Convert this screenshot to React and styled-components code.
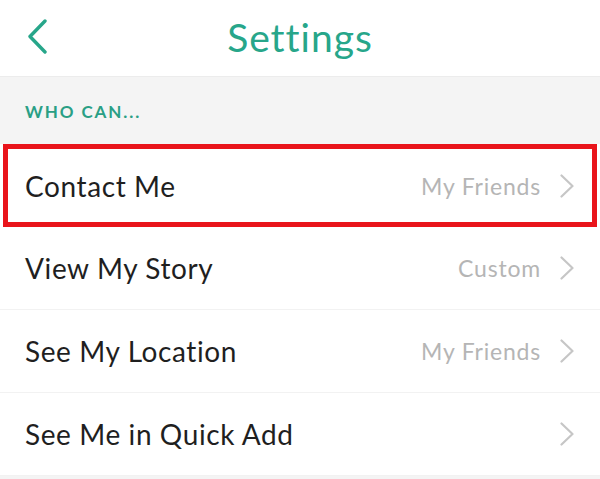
import styled, { createGlobalStyle } from "styled-components";

const Global = createGlobalStyle`
  html, body {
    margin: 0;
    padding: 0;
    background: #f4f4f4;
  }
  body {
    font-family: Lato, "Open Sans", sans-serif;
  }
`;

const Screen = styled.div`
  width: 600px;
  height: 479px;
  background: #f4f4f4;
  overflow: hidden;
`;

const Header = styled.header`
  height: 76px;
  background: #fff;
  border-bottom: 1px solid #ececec;
  display: grid;
  grid-template-columns: 80px 1fr 80px;
  align-items: center;
`;

const Back = styled.button`
  border: 0;
  background: none;
  padding: 0 0 4px 27px;
  display: flex;
  align-items: center;
  height: 100%;
`;

const Title = styled.h1`
  margin: 0;
  text-align: center;
  font-size: 39px;
  font-weight: 400;
  color: #27a68a;
  letter-spacing: 1px;
  padding-bottom: 2px;
`;

const SectionLabel = styled.div`
  height: 67px;
  padding-left: 25px;
  display: flex;
  align-items: center;
  font-size: 17px;
  font-weight: 700;
  letter-spacing: 1.9px;
  color: #2a9f85;
  padding-top: 1px;
  box-sizing: border-box;
`;

const List = styled.div`
  background: #fff;
`;

const Row = styled.div`
  height: 83px;
  box-sizing: border-box;
  display: flex;
  align-items: center;
  padding: 0 26px 0 25px;
  border-bottom: 1px solid #f2f2f2;
  ${(p) =>
    p.$highlighted &&
    `
    margin: 0 3px;
    border: 5px solid #e9141b;
    padding: 0 18px 0 17px;
  `}
`;

const Label = styled.span`
  flex: 1;
  font-size: 28px;
  color: #1f1f1f;
  letter-spacing: 0.6px;
`;

const Value = styled.span`
  font-size: 23px;
  color: #b5b5b5;
  margin-right: 19px;
  letter-spacing: 0.8px;
`;

const Chevron = ({ color = "#c6c6c6", w = 14, h = 24, stroke = 2.2 }) => (
  <svg width={w} height={h} viewBox={`0 0 ${w} ${h}`} fill="none">
    <path
      d={`M1.5 1.5 L${w - 1.5} ${h / 2} L1.5 ${h - 1.5}`}
      stroke={color}
      strokeWidth={stroke}
      strokeLinecap="round"
      strokeLinejoin="round"
    />
  </svg>
);

const BackIcon = () => (
  <svg width="20" height="35" viewBox="0 0 20 35" fill="none">
    <path
      d="M18 2 L3 17.5 L18 33"
      stroke="#27a68a"
      strokeWidth="3.4"
      strokeLinecap="round"
      strokeLinejoin="round"
    />
  </svg>
);

const rows = [
  { label: "Contact Me", value: "My Friends", highlighted: true },
  { label: "View My Story", value: "Custom" },
  { label: "See My Location", value: "My Friends" },
  { label: "See Me in Quick Add", value: "" },
];

export default function App() {
  return (
    <Screen>
      <Global />
      <Header>
        <Back aria-label="Back">
          <BackIcon />
        </Back>
        <Title>Settings</Title>
        <span />
      </Header>
      <SectionLabel>WHO CAN...</SectionLabel>
      <List>
        {rows.map((r) => (
          <Row key={r.label} $highlighted={r.highlighted}>
            <Label>{r.label}</Label>
            {r.value && <Value>{r.value}</Value>}
            <Chevron />
          </Row>
        ))}
      </List>
    </Screen>
  );
}
